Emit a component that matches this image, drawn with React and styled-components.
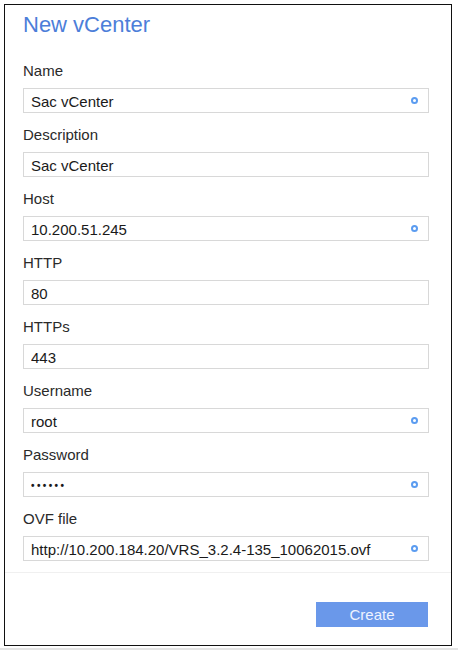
import React from 'react';
import styled, { createGlobalStyle } from 'styled-components';

const GlobalStyle = createGlobalStyle`
  html, body {
    margin: 0;
    padding: 0;
    background: #ffffff;
  }
  body {
    font-family: "Liberation Sans", Arial, sans-serif;
  }
`;

const Page = styled.div`
  width: 458px;
  box-sizing: border-box;
  padding: 4px 6px 2px 4px;
  border-bottom: 2px solid #e4e4e4;
`;

const Dialog = styled.div`
  width: 448px;
  box-sizing: border-box;
  border: 1px solid #111111;
  background: #ffffff;
`;

const Body = styled.div`
  padding: 7px 22px 11px 18px;
`;

const Title = styled.h1`
  margin: 0 0 11px;
  font-size: 22px;
  line-height: 26px;
  font-weight: normal;
  color: #4c7ed9;
`;

const Label = styled.label`
  display: block;
  padding-top: 13px;
  margin-bottom: 8px;
  font-size: 15px;
  line-height: 18px;
  color: #2a2a2a;
`;

const InputBox = styled.div`
  display: flex;
  align-items: center;
  height: 25px;
  box-sizing: border-box;
  border: 1px solid #d8d8d8;
  background: #ffffff;
  padding: 0 10px 0 6px;
`;

const Input = styled.input`
  flex: 1;
  min-width: 0;
  border: none;
  outline: none;
  background: transparent;
  padding: 2px 0 0 1px;
  margin: 0;
  height: 21px;
  font-family: "Liberation Sans", Arial, sans-serif;
  font-size: ${(p) => (p.$masked ? '10px' : '15px')};
  letter-spacing: ${(p) => (p.$masked ? '2.4px' : 'normal')};
  font-weight: ${(p) => (p.$masked ? 'bold' : 'normal')};
  color: #1a1a1a;
`;

const Indicator = styled.span`
  flex: none;
  width: 7px;
  height: 7px;
  box-sizing: border-box;
  border: 2px solid #5b9cf0;
  border-radius: 50%;
`;

const Footer = styled.div`
  display: flex;
  justify-content: flex-end;
  border-top: 1px solid #f0f0f0;
  padding: 29px 23px 18px 0;
`;

const Button = styled.button`
  width: 112px;
  height: 25px;
  border: none;
  margin: 0;
  padding: 0;
  background: #6a98ea;
  color: #eef3ff;
  font-family: "Liberation Sans", Arial, sans-serif;
  font-size: 15px;
  cursor: pointer;
`;

const fields = [
  { label: 'Name', value: 'Sac vCenter', required: true },
  { label: 'Description', value: 'Sac vCenter' },
  { label: 'Host', value: '10.200.51.245', required: true },
  { label: 'HTTP', value: '80' },
  { label: 'HTTPs', value: '443' },
  { label: 'Username', value: 'root', required: true },
  { label: 'Password', value: '••••••', required: true, masked: true },
  { label: 'OVF file', value: 'http://10.200.184.20/VRS_3.2.4-135_10062015.ovf', required: true },
];

const App = () => {
  return (
    <>
      <GlobalStyle />
      <Page>
        <Dialog>
          <Body>
            <Title>New vCenter</Title>
            {fields.map((f) => (
              <div key={f.label}>
                <Label>{f.label}</Label>
                <InputBox>
                  <Input readOnly value={f.value} $masked={f.masked} />
                  {f.required && <Indicator />}
                </InputBox>
              </div>
            ))}
          </Body>
          <Footer>
            <Button>Create</Button>
          </Footer>
        </Dialog>
      </Page>
    </>
  );
};

export default App;
